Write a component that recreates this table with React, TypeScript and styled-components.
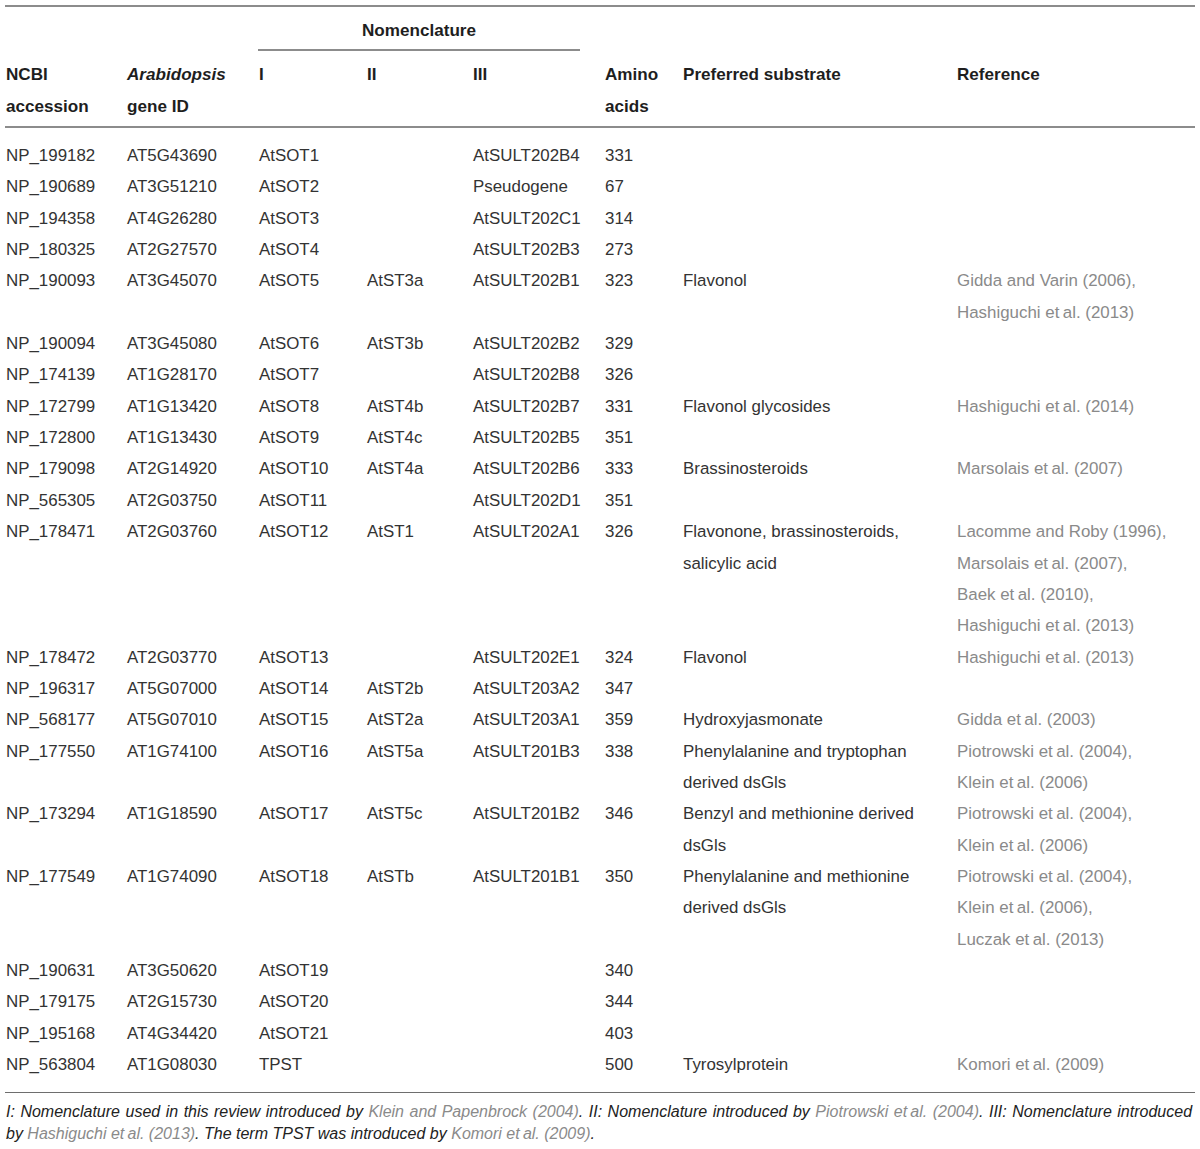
import React from "react";
import styled, { createGlobalStyle } from "styled-components";

const Global = createGlobalStyle`
  html, body { margin: 0; padding: 0; background: #fff; }
  body { font-family: "Liberation Sans", Arial, sans-serif; color: #333; }
`;

const Page = styled.div`
  width: 1200px;
  padding: 5px 0 0 0;
  box-sizing: border-box;
`;

const Table = styled.table`
  width: 1190px;
  margin-left: 5px;
  border-collapse: collapse;
  table-layout: fixed;
  border-top: 2px solid #8c8c8c;
  border-bottom: 1px solid #6e6e6e;
`;

const Th = styled.th<{ $pt?: number; $pb?: number }>`
  text-align: left;
  vertical-align: top;
  font-weight: bold;
  font-size: 17.1px;
  line-height: 31.34px;
  color: #1e1e1e;
  padding: ${(p) => p.$pt ?? 0}px 0 ${(p) => p.$pb ?? 0}px 1px;
  white-space: nowrap;
`;

const HeadRow = styled.tr<{ $line?: boolean }>`
  border-bottom: ${(p) => (p.$line ? "2px solid #8c8c8c" : "none")};
`;

const GroupTh = styled.th`
  padding: 8px 0 0 0;
  font-weight: bold;
  font-size: 17.1px;
  line-height: 31.34px;
  color: #1e1e1e;
`;

const GroupLabel = styled.div`
  width: 322px;
  text-align: center;
  padding-bottom: 3px;
  border-bottom: 2px solid #8c8c8c;
`;

const Body = styled.tbody`
  tr:first-child td { padding-top: 12px; }
  tr:last-child td { padding-bottom: 12px; }
`;

const Td = styled.td<{ $ref?: boolean }>`
  text-align: left;
  vertical-align: top;
  font-size: 16.9px;
  line-height: 31.34px;
  padding: 0 0 0 1px;
  color: ${(p) => (p.$ref ? "#8a8a8a" : "#333")};
  white-space: nowrap;
`;

const Line = styled.div``;

const Note = styled.div`
  margin: 8px 0 0 6px;
  width: 1186px;
  font-style: italic;
  font-size: 16px;
  line-height: 22px;
  color: #222;
  white-space: nowrap;
`;

const NoteLine = styled.div<{ $justify?: boolean }>`
  text-align: ${(p) => (p.$justify ? "justify" : "left")};
  text-align-last: ${(p) => (p.$justify ? "justify" : "left")};
  white-space: ${(p) => (p.$justify ? "normal" : "nowrap")};
`;

const Cite = styled.span`
  color: #8a8a8a;
`;

type Row = {
  ncbi: string;
  gene: string;
  i: string;
  ii?: string;
  iii?: string;
  aa: string;
  sub?: string[];
  refs?: string[];
};

const E = "et\u2009al.";

const rows: Row[] = [
  { ncbi: "NP_199182", gene: "AT5G43690", i: "AtSOT1", iii: "AtSULT202B4", aa: "331" },
  { ncbi: "NP_190689", gene: "AT3G51210", i: "AtSOT2", iii: "Pseudogene", aa: "67" },
  { ncbi: "NP_194358", gene: "AT4G26280", i: "AtSOT3", iii: "AtSULT202C1", aa: "314" },
  { ncbi: "NP_180325", gene: "AT2G27570", i: "AtSOT4", iii: "AtSULT202B3", aa: "273" },
  {
    ncbi: "NP_190093", gene: "AT3G45070", i: "AtSOT5", ii: "AtST3a", iii: "AtSULT202B1", aa: "323",
    sub: ["Flavonol"], refs: ["Gidda and Varin (2006),", `Hashiguchi ${E} (2013)`],
  },
  { ncbi: "NP_190094", gene: "AT3G45080", i: "AtSOT6", ii: "AtST3b", iii: "AtSULT202B2", aa: "329" },
  { ncbi: "NP_174139", gene: "AT1G28170", i: "AtSOT7", iii: "AtSULT202B8", aa: "326" },
  {
    ncbi: "NP_172799", gene: "AT1G13420", i: "AtSOT8", ii: "AtST4b", iii: "AtSULT202B7", aa: "331",
    sub: ["Flavonol glycosides"], refs: [`Hashiguchi ${E} (2014)`],
  },
  { ncbi: "NP_172800", gene: "AT1G13430", i: "AtSOT9", ii: "AtST4c", iii: "AtSULT202B5", aa: "351" },
  {
    ncbi: "NP_179098", gene: "AT2G14920", i: "AtSOT10", ii: "AtST4a", iii: "AtSULT202B6", aa: "333",
    sub: ["Brassinosteroids"], refs: [`Marsolais ${E} (2007)`],
  },
  { ncbi: "NP_565305", gene: "AT2G03750", i: "AtSOT11", iii: "AtSULT202D1", aa: "351" },
  {
    ncbi: "NP_178471", gene: "AT2G03760", i: "AtSOT12", ii: "AtST1", iii: "AtSULT202A1", aa: "326",
    sub: ["Flavonone, brassinosteroids,", "salicylic acid"],
    refs: ["Lacomme and Roby (1996),", `Marsolais ${E} (2007),`, `Baek ${E} (2010),`, `Hashiguchi ${E} (2013)`],
  },
  {
    ncbi: "NP_178472", gene: "AT2G03770", i: "AtSOT13", iii: "AtSULT202E1", aa: "324",
    sub: ["Flavonol"], refs: [`Hashiguchi ${E} (2013)`],
  },
  { ncbi: "NP_196317", gene: "AT5G07000", i: "AtSOT14", ii: "AtST2b", iii: "AtSULT203A2", aa: "347" },
  {
    ncbi: "NP_568177", gene: "AT5G07010", i: "AtSOT15", ii: "AtST2a", iii: "AtSULT203A1", aa: "359",
    sub: ["Hydroxyjasmonate"], refs: [`Gidda ${E} (2003)`],
  },
  {
    ncbi: "NP_177550", gene: "AT1G74100", i: "AtSOT16", ii: "AtST5a", iii: "AtSULT201B3", aa: "338",
    sub: ["Phenylalanine and tryptophan", "derived dsGls"],
    refs: [`Piotrowski ${E} (2004),`, `Klein ${E} (2006)`],
  },
  {
    ncbi: "NP_173294", gene: "AT1G18590", i: "AtSOT17", ii: "AtST5c", iii: "AtSULT201B2", aa: "346",
    sub: ["Benzyl and methionine derived", "dsGls"],
    refs: [`Piotrowski ${E} (2004),`, `Klein ${E} (2006)`],
  },
  {
    ncbi: "NP_177549", gene: "AT1G74090", i: "AtSOT18", ii: "AtSTb", iii: "AtSULT201B1", aa: "350",
    sub: ["Phenylalanine and methionine", "derived dsGls"],
    refs: [`Piotrowski ${E} (2004),`, `Klein ${E} (2006),`, `Luczak ${E} (2013)`],
  },
  { ncbi: "NP_190631", gene: "AT3G50620", i: "AtSOT19", aa: "340" },
  { ncbi: "NP_179175", gene: "AT2G15730", i: "AtSOT20", aa: "344" },
  { ncbi: "NP_195168", gene: "AT4G34420", i: "AtSOT21", aa: "403" },
  {
    ncbi: "NP_563804", gene: "AT1G08030", i: "TPST", aa: "500",
    sub: ["Tyrosylprotein"], refs: [`Komori ${E} (2009)`],
  },
];

const widths = [121, 132, 108, 106, 132, 78, 274, 239];

export default function App() {
  return (
    <Page>
      <Global />
      <Table>
        <colgroup>
          {widths.map((w, k) => (
            <col key={k} style={{ width: w }} />
          ))}
        </colgroup>
        <thead>
          <HeadRow>
            <Th />
            <Th />
            <GroupTh colSpan={3}>
              <GroupLabel>Nomenclature</GroupLabel>
            </GroupTh>
            <Th />
            <Th />
            <Th />
          </HeadRow>
          <HeadRow $line>
            <Th $pt={8} $pb={4}>NCBI<br />accession</Th>
            <Th $pt={8} $pb={4}><i>Arabidopsis</i><br />gene ID</Th>
            <Th $pt={8} $pb={4}>I</Th>
            <Th $pt={8} $pb={4}>II</Th>
            <Th $pt={8} $pb={4}>III</Th>
            <Th $pt={8} $pb={4}>Amino<br />acids</Th>
            <Th $pt={8} $pb={4}>Preferred substrate</Th>
            <Th $pt={8} $pb={4}>Reference</Th>
          </HeadRow>
        </thead>
        <Body>
          {rows.map((r) => (
            <tr key={r.ncbi}>
              <Td>{r.ncbi}</Td>
              <Td>{r.gene}</Td>
              <Td>{r.i}</Td>
              <Td>{r.ii ?? ""}</Td>
              <Td>{r.iii ?? ""}</Td>
              <Td>{r.aa}</Td>
              <Td>{(r.sub ?? []).map((s) => <Line key={s}>{s}</Line>)}</Td>
              <Td $ref>{(r.refs ?? []).map((s) => <Line key={s}>{s}</Line>)}</Td>
            </tr>
          ))}
        </Body>
      </Table>
      <Note>
        <NoteLine $justify>
          I: Nomenclature used in this review introduced by <Cite>Klein and Papenbrock (2004)</Cite>. II: Nomenclature
          introduced by <Cite>Piotrowski {E} (2004)</Cite>. III: Nomenclature introduced
        </NoteLine>
        <NoteLine>
          by <Cite>Hashiguchi {E} (2013)</Cite>. The term TPST was introduced by <Cite>Komori {E} (2009)</Cite>.
        </NoteLine>
      </Note>
    </Page>
  );
}
